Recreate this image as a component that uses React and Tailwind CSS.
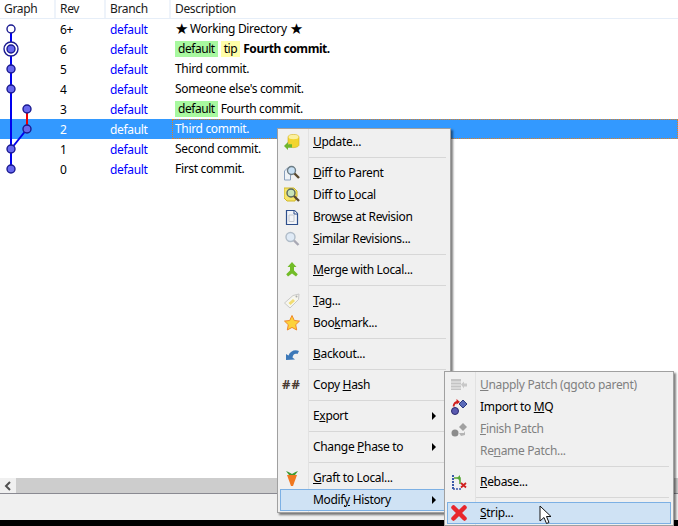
const font = "font-['Noto_Sans','Open_Sans',sans-serif]";

const rows = [
  { rev: '6+', desc: <span className="flex items-center"><Star /><span className="mx-[3px]">Working Directory</span><Star /></span> },
  { rev: '6', desc: <><Tag color="bg-[#a8f8a0]">default</Tag><Tag color="bg-[#ffffa8]">tip</Tag><b className="tracking-[-0.43px]">Fourth commit.</b></> },
  { rev: '5', desc: 'Third commit.' },
  { rev: '4', desc: "Someone else's commit." },
  { rev: '3', desc: <><Tag color="bg-[#a8f8a0]">default</Tag>Fourth commit.</> },
  { rev: '2', desc: 'Third commit.', selected: true },
  { rev: '1', desc: 'Second commit.' },
  { rev: '0', desc: 'First commit.' },
];

function Star() {
  return <span className="inline-block w-[12px] font-['DejaVu_Sans'] text-[15px] leading-4 text-black">★</span>;
}

function Tag({ color, children }) {
  return <span className={`${color} mr-[3px] inline-block h-4 px-[3px] leading-4 tracking-[-0.45px]`}>{children}</span>;
}

function Graph() {
  const nodes = [49, 69, 89, 149, 169];
  return (
    <svg className="absolute left-0 top-0" width="56" height="180">
      <path d="M11 29V169" stroke="#0000ee" strokeWidth="2" fill="none" />
      <path d="M27 109V129" stroke="#ee0000" strokeWidth="2" fill="none" />
      <path d="M27 129L11 149" stroke="#0000ee" strokeWidth="2" fill="none" />
      <circle cx="11" cy="29" r="4" fill="#fff" stroke="#1a1a90" strokeWidth="1.400" />
      <circle cx="11" cy="49" r="7" fill="#fff" stroke="#1a1a90" strokeWidth="1.400" />
      {nodes.map((y) => (
        <circle key={y} cx="11" cy={y} r="4" fill="#6868ee" stroke="#1a1a90" strokeWidth="1.400" />
      ))}
      <circle cx="27" cy="109" r="4" fill="#6868ee" stroke="#1a1a90" strokeWidth="1.400" />
      <circle cx="27" cy="129" r="4" fill="#6868ee" stroke="#1a1a90" strokeWidth="1.400" />
    </svg>
  );
}

function Row({ rev, desc, selected }) {
  return (
    <div className={`flex h-5 items-center ${selected ? 'bg-[#3399ff] text-white' : 'text-black'}`}>
      <div className="w-[56px]" />
      <div className="w-[50px] pl-1 pt-px">{rev}</div>
      <div className={`w-[66px] pl-1 pt-px ${selected ? 'text-white' : 'text-[#0000ff]'}`}>default</div>
      <div className={`flex h-5 flex-1 items-center whitespace-nowrap ${selected ? 'border border-dotted border-[#e08020] pl-[2px]' : 'pl-[3px]'}`}>
        <div>{desc}</div>
      </div>
    </div>
  );
}

function Icon({ children }) {
  return <svg width="16" height="16" viewBox="0 0 16 16">{children}</svg>;
}

const icons = {
  update: (
    <Icon>
      <path d="M4 3c0-3.300 11-3.300 11 0v8c0 2-5 3-7 2.500L4 9z" fill="#f2d52e" stroke="#d0b020" strokeWidth=".6" />
      <ellipse cx="9.500" cy="3" rx="5" ry="2.200" fill="#fbf0a0" />
      <path d="M0 12l4-4v2.200h4v3.600H4V16z" fill="#6fb52c" />
    </Icon>
  ),
  diffParent: (
    <Icon>
      <path d="M.5 6l3-3h3v12h-6z" fill="#eef2f6" stroke="#8aa0bc" />
      <circle cx="7.500" cy="5.500" r="4" fill="#c8e0f4" stroke="#6c7c84" strokeWidth="1.400" />
      <path d="M10.500 8.500l4.500 4.500" stroke="#5a4a30" strokeWidth="2.400" />
    </Icon>
  ),
  diffLocal: (
    <Icon>
      <path d="M0 1h10l3 3v5l-2 5H3L0 11z" fill="#f6e468" stroke="#d0b828" />
      <circle cx="7" cy="6" r="4" fill="#c8e4b8" stroke="#586860" strokeWidth="1.400" />
      <path d="M10 9l5 5" stroke="#5a4a30" strokeWidth="2.400" />
    </Icon>
  ),
  browse: (
    <Icon>
      <path d="M2.500 1.500h8l3 3v11h-11z" fill="#f2f4f8" stroke="#2e4f8c" strokeWidth="1.200" />
      <path d="M10 1.500v3.500h3.500" fill="#fff" stroke="#2e4f8c" />
      <path d="M5 6h5v6.500H5z" fill="none" stroke="#c4c8d0" />
    </Icon>
  ),
  similar: (
    <Icon>
      <circle cx="6.500" cy="6" r="4.500" fill="#dfeaf6" stroke="#b0bcc8" strokeWidth="1.400" />
      <path d="M10 9.500l4.500 4.500" stroke="#a8a8b4" strokeWidth="2.400" />
    </Icon>
  ),
  merge: (
    <Icon>
      <path d="M8 0l4.500 5H10v3.500l3.800 3.800-1.800 2.200L8 11.500l-4 3-1.800-2.200L6 8.500V5H3.500z" fill="#72bc28" />
    </Icon>
  ),
  tag: (
    <Icon>
      <path d="M.5 10L9 2.500l6-1.500-.5 5.500L6 15z" fill="#f6f6ee" stroke="#c8c8c8" />
      <path d="M4.500 10L9 6l2 2-4.500 4z" fill="#f2dc70" />
      <circle cx="12.500" cy="3.500" r="1" fill="#aaa" />
    </Icon>
  ),
  star: (
    <Icon>
      <path d="M8 .5l2.300 5 5.200.6-3.800 3.600 1 5.300L8 12.400 3.300 15l1-5.300L.5 6.100l5.200-.6z" fill="#fcd23a" stroke="#f0882a" />
    </Icon>
  ),
  backout: (
    <Icon>
      <path d="M2 14V8L4.500 9.500C6 5 11 3 15 5l-1.500 3C10.500 7 9 8.500 8.500 11.500L11 13.500z" fill="#3c78b8" />
    </Icon>
  ),
  hash: <span className="text-[13px] font-bold tracking-[1px] text-[#4a3a32]">##</span>,
  carrot: (
    <Icon>
      <path d="M3 5h10l-4 11H7z" fill="#f07820" />
      <path d="M2 1l3 4h6l3-4-2.500 1L8 4 4.500 2z" fill="#3c9830" />
    </Icon>
  ),
  unapply: (
    <Icon>
      <path d="M0 2h10v11H0z" fill="#c4c4c4" />
      <path d="M0 5h10M0 8h10M0 11h10" stroke="#eee" />
      <path d="M10 7.500l3-3v2h3v3h-3v2z" fill="#c8c8c8" />
    </Icon>
  ),
  importMq: (
    <Icon>
      <circle cx="4" cy="12" r="3.500" fill="#5a5ab0" stroke="#2a2a70" />
      <path d="M12 1l4 4-4 4-4-4z" fill="#5a6ab8" stroke="#2a3a80" />
      <path d="M2.500 7.500C3 4 4.500 3 7 3" stroke="#d02020" strokeWidth="1.800" fill="none" />
      <path d="M5.500 0l3.500 3-3.500 2.500z" fill="#d02020" />
    </Icon>
  ),
  finish: (
    <Icon>
      <circle cx="4" cy="12" r="3.500" fill="#8c8c8c" />
      <path d="M12 2l4 4-4 4-4-4z" fill="#a0a0a0" />
      <path d="M8 12h5l1-2v4l-4 1z" fill="#b4b4b4" />
    </Icon>
  ),
  rebase: (
    <Icon>
      <path d="M2 1v15" stroke="#3a5aa8" strokeWidth="2" strokeDasharray="2 1" />
      <path d="M2 15h8" stroke="#3a5aa8" strokeWidth="1.500" strokeDasharray="2 1" />
      <path d="M3 4h6v6" stroke="#58a838" strokeWidth="1.600" fill="none" />
      <path d="M6 4l3-3v6z" fill="#58a838" />
      <path d="M10 9l5 4.500M15 9l-5 4.500" stroke="#d02020" strokeWidth="1.800" />
    </Icon>
  ),
  strip: (
    <Icon>
      <path d="M2.500 2.500l11 11M13.500 2.500l-11 11" stroke="#e8262c" strokeWidth="4.500" strokeLinecap="round" />
    </Icon>
  ),
};

function Item({ icon, children, disabled, active, arrow }) {
  return (
    <div className={`relative flex h-[22px] items-center ${disabled ? 'text-[#808080]' : 'text-black'}`}>
      {active && <div className="absolute inset-y-0 left-[2px] right-[2px] border border-[#7cb0e4] bg-[#cfe2f4]" />}
      <div className="relative flex w-[30px] shrink-0 items-center justify-center pr-[3px]">{icons[icon]}</div>
      <div className="relative flex-1 whitespace-nowrap pl-[5px]">{children}</div>
      {arrow && <div className="relative mr-[14px] h-0 w-0 border-y-[4px] border-l-[4px] border-y-transparent border-l-black" />}
    </div>
  );
}

function Sep() {
  return (
    <div className="flex h-[9px] items-center">
      <div className="w-[30px]" />
      <div className="mr-1 h-px flex-1 bg-[#d7d7d7]" />
    </div>
  );
}

function MainMenu() {
  return (
    <div className="absolute left-[277px] top-[128px] h-[385px] w-[174px] border border-[#a0a0a0] bg-[#f0f0f0] py-[2px] shadow-[2px_2px_2px_rgba(0,0,0,0.5)]">
      <div className="absolute bottom-0 left-[30px] top-0 w-px bg-[#e2e2e2]" />
      <Item icon="update"><u>U</u>pdate...</Item>
      <Sep />
      <Item icon="diffParent"><u>D</u>iff to Parent</Item>
      <Item icon="diffLocal">Diff to <u>L</u>ocal</Item>
      <Item icon="browse">Bro<u>w</u>se at Revision</Item>
      <Item icon="similar"><u>S</u>imilar Revisions...</Item>
      <Sep />
      <Item icon="merge"><u>M</u>erge with Local...</Item>
      <Sep />
      <Item icon="tag"><u>T</u>ag...</Item>
      <Item icon="star">Boo<u>k</u>mark...</Item>
      <Sep />
      <Item icon="backout"><u>B</u>ackout...</Item>
      <Sep />
      <Item icon="hash">Copy <u>H</u>ash</Item>
      <Sep />
      <Item arrow>E<u>x</u>port</Item>
      <Sep />
      <Item arrow>Change <u>P</u>hase to</Item>
      <Sep />
      <Item icon="carrot"><u>G</u>raft to Local...</Item>
      <Item arrow active>Modif<u>y</u> History</Item>
    </div>
  );
}

function SubMenu() {
  return (
    <div className="absolute left-[444px] top-[371px] h-[155px] w-[230px] border border-[#a0a0a0] bg-[#f0f0f0] py-[2px] shadow-[2px_2px_2px_rgba(0,0,0,0.5)]">
      <div className="absolute bottom-0 left-[30px] top-0 w-px bg-[#e2e2e2]" />
      <Item icon="unapply" disabled><u>U</u>napply Patch (qgoto parent)</Item>
      <Item icon="importMq">Import to <u>M</u>Q</Item>
      <Item icon="finish" disabled><u>F</u>inish Patch</Item>
      <Item disabled>Re<u>n</u>ame Patch...</Item>
      <Sep />
      <Item icon="rebase"><u>R</u>ebase...</Item>
      <Sep />
      <Item icon="strip" active><u>S</u>trip...</Item>
      <svg className="absolute left-[94px] top-[133px]" width="14" height="20" viewBox="0 0 14 20">
        <path d="M1 1v15l4-3.500 2.500 6 2.500-1-2.500-6H12z" fill="#fff" stroke="#111" strokeWidth="1" />
      </svg>
    </div>
  );
}

export default function App() {
  return (
    <div className={`relative flex h-[526px] w-[678px] flex-col overflow-hidden bg-white text-[12px] tracking-[-0.33px] ${font}`}>
      <div className="flex h-[19px] border-b border-[#e6eef8] text-[#1a1a1a]">
        <div className="w-[56px] border-r-2 border-[#eef3fa] pl-1">Graph</div>
        <div className="w-[50px] border-r-2 border-[#eef3fa] pl-1">Rev</div>
        <div className="w-[65px] border-r-2 border-[#eef3fa] pl-1">Branch</div>
        <div className="flex-1 pl-1">Description</div>
      </div>
      <div className="relative flex-1">
        <div className="absolute -top-[19px] left-0 right-0">
          <div className="h-[19px]" />
          {rows.map((r) => (
            <Row key={r.rev} {...r} />
          ))}
          <Graph />
        </div>
      </div>
      <div className="flex h-[15px]">
        <div className="flex w-4 items-center justify-center bg-[#f0f0f0]">
          <svg width="8" height="10" viewBox="0 0 8 10">
            <path d="M6 1L2 5l4 4" stroke="#505050" strokeWidth="2" fill="none" />
          </svg>
        </div>
        <div className="flex-1 bg-[#cdcdcd]" />
      </div>
      <div className="h-[27px] border-t border-[#8a8a92] bg-[#f0f0f0]" />
      <div className="h-[6px] bg-black" />
      <MainMenu />
      <SubMenu />
    </div>
  );
}
